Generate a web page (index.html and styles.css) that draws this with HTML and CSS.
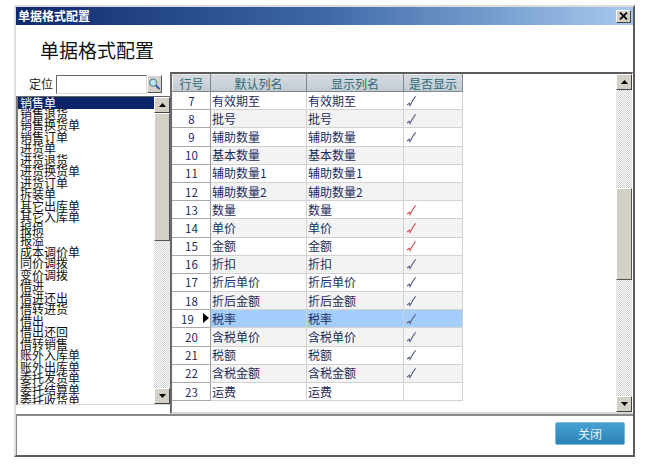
FILE: index.html
```html
<!DOCTYPE html>
<html lang="zh-CN">
<head>
<meta charset="utf-8">
<title>单据格式配置</title>
<link rel="stylesheet" href="styles.css">
</head>
<body>
<svg class="defs" width="0" height="0" aria-hidden="true">
  <symbol id="tick" viewBox="0 0 12 14"><path d="M2 11 L4.4 9.2 L5 11.6 Q7 7 10.6 2.4" fill="none" stroke="currentColor" stroke-width="1.1"/></symbol>
  <symbol id="up" viewBox="0 0 7 4"><path d="M3.5 0 L7 4 H0 Z"/></symbol>
  <symbol id="down" viewBox="0 0 7 4"><path d="M0 0 H7 L3.5 4 Z"/></symbol>
</svg>
<div class="window">
  <div class="titlebar">
    <span class="title-text">单据格式配置</span>
    <span class="close">
      <svg width="9" height="8" viewBox="0 0 9 8"><path d="M1 0.5 L8 7.5 M8 0.5 L1 7.5" stroke="#111" stroke-width="1.8"/></svg>
    </span>
  </div>
  <div class="heading"><h1>单据格式配置</h1></div>
  <div class="main">
    <div class="left">
      <div class="locate">
        <label class="locate-label">定位</label>
        <div class="locate-input"></div>
        <span class="search">
          <svg width="14" height="14" viewBox="0 0 14 14"><circle cx="5.5" cy="5.5" r="3.8" fill="#bfe6ee" stroke="#5a8f98" stroke-width="1.4"/><path d="M8.5 8.5 L12.5 12.5" stroke="#2a4fa8" stroke-width="2.2"/></svg>
        </span>
      </div>
      <div class="listbox">
        <ul class="list">
          <li class="sel">销售单</li><li>销售退货</li><li>销售换货单</li><li>销售订单</li><li>进货单</li><li>进货退货</li><li>进货换货单</li><li>进货订单</li><li>拆装单</li><li>其它出库单</li><li>其它入库单</li><li>报损</li><li>报溢</li><li>成本调价单</li><li>同价调拨</li><li>变价调拨</li><li>借进</li><li>借进还出</li><li>借转进货</li><li>借出</li><li>借出还回</li><li>借转销售</li><li>账外入库单</li><li>账外出库单</li><li>委托发货单</li><li>委托结算单</li><li>委托收货单</li>
        </ul>
        <div class="sb sb-list">
          <span class="sb-btn"><svg width="7" height="4"><use href="#up"/></svg></span>
          <span class="thumb thumb-list"></span>
          <span class="track"></span>
          <span class="sb-btn"><svg width="7" height="4"><use href="#down"/></svg></span>
        </div>
      </div>
    </div>
    <div class="gridpanel">
      <div class="gridwrap">
        <table class="grid">
          <colgroup><col class="c0"><col class="c1"><col class="c2"><col class="c3"></colgroup>
          <thead><tr><th>行号</th><th>默认列名</th><th>显示列名</th><th>是否显示</th></tr></thead>
          <tbody>
            <tr><th>7</th><td>有效期至</td><td>有效期至</td><td class="chk"><svg class="tick" width="12" height="14"><use href="#tick"/></svg></td></tr>
            <tr class="alt"><th>8</th><td>批号</td><td>批号</td><td class="chk"><svg class="tick" width="12" height="14"><use href="#tick"/></svg></td></tr>
            <tr><th>9</th><td>辅助数量</td><td>辅助数量</td><td class="chk"><svg class="tick" width="12" height="14"><use href="#tick"/></svg></td></tr>
            <tr class="alt"><th>10</th><td>基本数量</td><td>基本数量</td><td class="chk"></td></tr>
            <tr><th>11</th><td>辅助数量1</td><td>辅助数量1</td><td class="chk"></td></tr>
            <tr class="alt"><th>12</th><td>辅助数量2</td><td>辅助数量2</td><td class="chk"></td></tr>
            <tr><th>13</th><td>数量</td><td>数量</td><td class="chk"><svg class="tick red" width="12" height="14"><use href="#tick"/></svg></td></tr>
            <tr class="alt"><th>14</th><td>单价</td><td>单价</td><td class="chk"><svg class="tick red" width="12" height="14"><use href="#tick"/></svg></td></tr>
            <tr><th>15</th><td>金额</td><td>金额</td><td class="chk"><svg class="tick red" width="12" height="14"><use href="#tick"/></svg></td></tr>
            <tr class="alt"><th>16</th><td>折扣</td><td>折扣</td><td class="chk"><svg class="tick" width="12" height="14"><use href="#tick"/></svg></td></tr>
            <tr><th>17</th><td>折后单价</td><td>折后单价</td><td class="chk"><svg class="tick" width="12" height="14"><use href="#tick"/></svg></td></tr>
            <tr class="alt"><th>18</th><td>折后金额</td><td>折后金额</td><td class="chk"><svg class="tick" width="12" height="14"><use href="#tick"/></svg></td></tr>
            <tr class="cur"><th><span class="rownum">19</span><span class="arrow"></span></th><td>税率</td><td>税率</td><td class="chk"><svg class="tick" width="12" height="14"><use href="#tick"/></svg></td></tr>
            <tr class="alt"><th>20</th><td>含税单价</td><td>含税单价</td><td class="chk"><svg class="tick" width="12" height="14"><use href="#tick"/></svg></td></tr>
            <tr><th>21</th><td>税额</td><td>税额</td><td class="chk"><svg class="tick" width="12" height="14"><use href="#tick"/></svg></td></tr>
            <tr class="alt"><th>22</th><td>含税金额</td><td>含税金额</td><td class="chk"><svg class="tick" width="12" height="14"><use href="#tick"/></svg></td></tr>
            <tr><th>23</th><td>运费</td><td>运费</td><td class="chk"></td></tr>
          </tbody>
        </table>
      </div>
      <div class="sb sb-grid">
        <span class="sb-btn"><svg width="7" height="4"><use href="#up"/></svg></span>
        <span class="track track-top"></span>
        <span class="thumb thumb-grid"></span>
        <span class="track"></span>
        <span class="sb-btn"><svg width="7" height="4"><use href="#down"/></svg></span>
      </div>
    </div>
  </div>
  <div class="footer">
    <button class="closebtn" type="button">关闭</button>
  </div>
</div>
</body>
</html>
```
FILE: styles.css
```css
* { box-sizing: border-box; }
html, body { margin: 0; height: 100%; background: #fff; }
body {
  padding: 5px 0 0 14px;
  font-family: "Noto Sans CJK SC", "Liberation Sans", sans-serif;
  font-size: 12px;
  color: #1c1c1c;
  overflow: hidden;
}
.defs { position: absolute; }
.window {
  width: 621px;
  height: 452px;
  display: flex;
  flex-direction: column;
  background: #fff;
  border-style: solid;
  border-width: 2px;
  border-color: #dcdcd8 #5c5c5c #5c5c5c #dcdcd8;
}
.titlebar {
  height: 18px;
  flex: none;
  display: flex;
  align-items: center;
  justify-content: space-between;
  padding: 0 2px 0 2px;
  background: linear-gradient(90deg, #0d2a6e 0%, #3f68a8 50%, #a6caee 100%);
}
.title-text { color: #fff; font-weight: 700; font-size: 12px; line-height: 16px; }
.close {
  width: 15px;
  height: 13px;
  display: flex;
  align-items: center;
  justify-content: center;
  background: #d4d0c8;
  border: 1px solid;
  border-color: #fff #444 #444 #fff;
}
.heading { height: 47px; flex: none; padding: 12px 0 0 24px; }
h1 { margin: 0; font-size: 19px; line-height: 26px; font-weight: 400; color: #111; }
.main { height: 342px; flex: none; display: flex; }
.left { width: 154px; flex: none; display: flex; flex-direction: column; }
.locate { height: 24px; flex: none; display: flex; align-items: center; padding-left: 13px; }
.locate-label { width: 27px; font-size: 12px; line-height: 18px; color: #222; }
.locate-input {
  width: 91px;
  height: 19px;
  background: #fff;
  border: 1px solid;
  border-color: #666 #ddd #ddd #666;
}
.search {
  width: 15px;
  height: 18px;
  display: flex;
  align-items: center;
  justify-content: center;
  background: #d4d0c8;
  border: 1px solid;
  border-color: #fff #555 #555 #fff;
}
.listbox {
  height: 309px;
  flex: none;
  display: flex;
  border: 1px solid;
  border-width: 1px 0 1px 2px;
  border-color: #666 #fff #d8d8d8 #777;
}
.list {
  flex: 1;
  min-width: 0;
  margin: 0;
  padding: 0;
  list-style: none;
  overflow: hidden;
  font-size: 12px;
  line-height: 10px;
  color: #111;
}
.list li { height: 11.5px; padding-left: 2px; white-space: nowrap; }
.list li.sel { height: 12px; line-height: 11px; margin-bottom: -0.5px; background: #0a246a; color: #fff; }
.sb {
  width: 16px;
  flex: none;
  display: flex;
  flex-direction: column;
  background: repeating-conic-gradient(#d0d0d0 0 25%, #fff 0 50%) 0 0 / 2px 2px;
}
.sb-btn {
  height: 16px;
  flex: none;
  display: flex;
  align-items: center;
  justify-content: center;
  background: #d4d0c8;
  border: 1px solid;
  border-color: #fff #444 #444 #fff;
}
.sb-btn svg { fill: #000; }
.thumb {
  flex: none;
  background: #d4d0c8;
  border: 1px solid;
  border-color: #fff #555 #555 #fff;
}
.thumb-list { height: 128px; }
.thumb-grid { height: 92px; }
.track { flex: 1; }
.track-top { flex: none; height: 98px; }
.gridpanel {
  flex: 1;
  min-width: 0;
  display: flex;
  border: 2px solid;
  border-color: #5c5c5c #fff #d8d8d8 #6a6a6a;
  border-right-width: 1px;
}
.gridwrap { flex: 1; min-width: 0; overflow: hidden; }
.grid {
  border-collapse: collapse;
  table-layout: fixed;
  width: 290px;
  color: #1d2c5c;
  font-size: 12px;
}
.c0 { width: 38px; }
.c1 { width: 96px; }
.c2 { width: 97px; }
.c3 { width: 59px; }
.grid thead th {
  height: 17px;
  padding: 0;
  font-weight: 400;
  line-height: 15px;
  color: #2c6a78;
  background: linear-gradient(180deg, #d6dbe0 0%, #c2c9d1 100%);
  border: 1px solid;
  border-color: #eef0f2 #7f8790 #7f8790 #eef0f2;
}
.grid tbody tr { height: 18.19px; }
.grid tbody th {
  position: relative;
  padding: 0;
  font-weight: 400;
  font-size: 11.5px;
  line-height: 16px;
  text-align: center;
  background: #fff;
  border: 1px solid;
  border-color: #fff #9c9c9c #a8a8a8 #f4f4f4;
}
.grid td {
  padding: 0 0 0 1px;
  line-height: 16px;
  white-space: nowrap;
  overflow: hidden;
  border: 1px solid #d2d2d2;
  background: #fff;
}
.grid .alt td { background: #f3f3f3; }
.grid .cur td { background: #a4cdfb; }
.tick { display: block; color: #5b6384; }
.tick.red { color: #d2555c; }
.rownum { position: relative; left: -4px; }
.arrow {
  position: absolute;
  right: 1px;
  top: 3px;
  width: 0;
  height: 0;
  border-style: solid;
  border-width: 5.5px 0 5.5px 6px;
  border-color: transparent transparent transparent #000;
}
.footer {
  flex: 1;
  display: flex;
  align-items: flex-start;
  justify-content: flex-end;
  padding: 6px 8px 0 0;
  border-top: 2px solid #8a8a8a;
  border-left: 1px solid #8a8a8a;
}
.closebtn {
  width: 70px;
  height: 23px;
  padding: 0;
  font-family: inherit;
  font-size: 12px;
  line-height: 16px;
  color: #e8f4fa;
  background: linear-gradient(180deg, #47a0d2 0%, #2a82b8 100%);
  border: 1px solid #7db8d8;
  border-radius: 2px;
}
```
